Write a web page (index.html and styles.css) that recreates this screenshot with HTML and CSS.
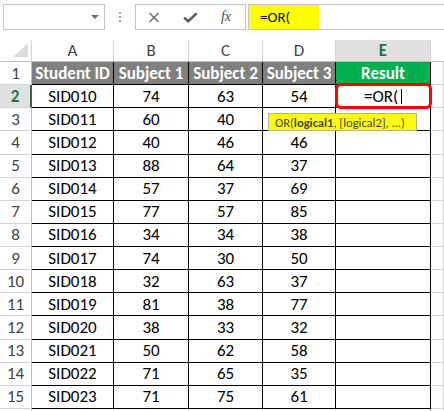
FILE: index.html
```html
<!DOCTYPE html>
<html>
<head>
<meta charset="utf-8">
<title>OR function</title>
<link rel="stylesheet" href="styles.css">
</head>
<body>
<div class="toolbar">
  <div class="namebox"><span class="caret"></span></div>
  <div class="grip"><i></i><i></i><i></i></div>
  <div class="fxbtns">
    <span class="btn"><svg width="12" height="11" viewBox="0 0 12 11"><path d="M1.5 1L10.5 10M10.5 1L1.5 10" stroke="#6e6e6e" stroke-width="1.5" fill="none"/></svg></span>
    <span class="btn"><svg width="15" height="11" viewBox="0 0 15 11"><path d="M1.2 5.6L5.2 9.2L13.6 1.4" fill="none" stroke="#5c5c5c" stroke-width="2.6"/></svg></span>
    <span class="btn fx">fx</span>
  </div>
  <div class="formula"><span class="hl">=OR(</span></div>
</div>
<div class="sheet">
  <div class="corner"><svg width="31" height="21" viewBox="0 0 31 21"><polygon points="13,17 28,17 28,3" fill="#dcdcdc"/></svg></div>
  <div class="ch">A</div><div class="ch">B</div><div class="ch">C</div><div class="ch">D</div><div class="ch on">E</div><div class="ch last"></div>

  <div class="rh">1</div><div class="d t">Student ID</div><div class="d t">Subject 1</div><div class="d t">Subject 2</div><div class="d t">Subject 3</div><div class="d t g">Result</div><div class="e"></div>
  <div class="rh on">2</div><div class="d">SID010</div><div class="d">74</div><div class="d">63</div><div class="d">54</div><div class="d edit"><span>=OR(</span><span class="cursor"></span></div><div class="e"></div>
  <div class="rh">3</div><div class="d">SID011</div><div class="d">60</div><div class="d">40</div><div class="d"></div><div class="d"></div><div class="e"></div>
  <div class="rh">4</div><div class="d">SID012</div><div class="d">40</div><div class="d">46</div><div class="d">46</div><div class="d"></div><div class="e"></div>
  <div class="rh">5</div><div class="d">SID013</div><div class="d">88</div><div class="d">64</div><div class="d">37</div><div class="d"></div><div class="e"></div>
  <div class="rh">6</div><div class="d">SID014</div><div class="d">57</div><div class="d">37</div><div class="d">69</div><div class="d"></div><div class="e"></div>
  <div class="rh">7</div><div class="d">SID015</div><div class="d">77</div><div class="d">57</div><div class="d">85</div><div class="d"></div><div class="e"></div>
  <div class="rh">8</div><div class="d">SID016</div><div class="d">34</div><div class="d">34</div><div class="d">38</div><div class="d"></div><div class="e"></div>
  <div class="rh">9</div><div class="d">SID017</div><div class="d">74</div><div class="d">30</div><div class="d">50</div><div class="d"></div><div class="e"></div>
  <div class="rh">10</div><div class="d">SID018</div><div class="d">32</div><div class="d">63</div><div class="d">37</div><div class="d"></div><div class="e"></div>
  <div class="rh">11</div><div class="d">SID019</div><div class="d">81</div><div class="d">38</div><div class="d">77</div><div class="d"></div><div class="e"></div>
  <div class="rh">12</div><div class="d">SID020</div><div class="d">38</div><div class="d">33</div><div class="d">32</div><div class="d"></div><div class="e"></div>
  <div class="rh">13</div><div class="d">SID021</div><div class="d">50</div><div class="d">62</div><div class="d">58</div><div class="d"></div><div class="e"></div>
  <div class="rh">14</div><div class="d">SID022</div><div class="d">71</div><div class="d">65</div><div class="d">35</div><div class="d"></div><div class="e"></div>
  <div class="rh">15</div><div class="d">SID023</div><div class="d">71</div><div class="d">75</div><div class="d">61</div><div class="d"></div><div class="e"></div>
  <div class="rh"></div><div class="e"></div><div class="e"></div><div class="e"></div><div class="e"></div><div class="e"></div><div class="e"></div>

  <div class="selbox"></div>
  <div class="tip">OR(<b>logical1</b>, [logical2], ...)</div>
</div>
</body>
</html>
```

FILE: styles.css
```css
* { box-sizing: border-box; }
html, body { margin: 0; padding: 0; background: #fff; overflow: hidden; }
body { width: 444px; height: 411px; font-family: Carlito, Lato, "Liberation Sans", sans-serif; }

.toolbar { display: flex; align-items: flex-start; height: 40px; padding: 4px 0 0 3px; }
.namebox { width: 102px; height: 26px; border: 1px solid #c6c6c6; display: flex; align-items: center; justify-content: flex-end; padding-right: 5px; }
.caret { width: 0; height: 0; border-left: 4px solid transparent; border-right: 4px solid transparent; border-top: 4px solid #6d6d6d; }
.grip { width: 30px; height: 26px; display: flex; flex-direction: column; align-items: center; padding-top: 8px; gap: 2px; }
.grip i { display: block; width: 2px; height: 2px; background: #a6a6a6; }
.fxbtns { width: 111px; height: 26px; border: 1px solid #c6c6c6; display: grid; grid-template-columns: repeat(3, 36px); align-items: center; }
.btn { display: flex; justify-content: center; align-items: center; height: 24px; }
.fx { font-family: "Liberation Serif", serif; font-style: italic; font-size: 14px; color: #4a4a4a; }
.formula { flex: 1; margin-left: 2px; margin-right: -2px; height: 26px; border: 1px solid #c6c6c6; }
.hl { display: block; width: 70px; height: 24px; background: #ffff00; padding-left: 11px; font-size: 15px; line-height: 24px; color: #000; }

.sheet { position: relative; display: grid; grid-template-columns: 32px 82px 75px 74px 73px 95px 1fr; grid-template-rows: 22px repeat(16, 23.14px); font-size: 17px; }
.sheet > div { display: flex; align-items: center; justify-content: center; white-space: nowrap; overflow: hidden; }
.corner { border-right: 1px solid #d4d4d4; border-bottom: 1px solid #bdbdbd; }
.ch { border-right: 1px solid #d4d4d4; border-bottom: 1px solid #bdbdbd; color: #444; }
.ch.on { background: #e1e1e1; color: #217346; font-weight: bold; }
.ch.last { border-right: none; }
.rh { border-right: 1px solid #bdbdbd; border-bottom: 1px solid #d4d4d4; color: #444; }
.rh.on { background: #e1e1e1; color: #217346; font-weight: bold; border-right: 2px solid #217346; }
.d { border-right: 1px solid #000; border-bottom: 1px solid #000; color: #000; }
.t { background: #808080; color: #fff; font-weight: bold; }
.t.g { background: #00b050; }
.e { border-right: 1px solid #d4d4d4; border-bottom: 1px solid #d4d4d4; }
.cursor { display: inline-block; width: 1px; height: 15px; background: #000; margin-left: 3px; }

.sheet > .selbox { position: absolute; left: 335px; top: 43px; width: 97px; height: 26px; border: 3px solid #ff0000; border-radius: 6px; }
.sheet > .tip { position: absolute; left: 268px; top: 73px; width: 149px; height: 18px; background: #ffff00; border: 1px solid #b5b58a; color: #444; font-size: 12.5px; justify-content: flex-start; padding-left: 6px; }
.tip b { font-weight: bold; }
```
